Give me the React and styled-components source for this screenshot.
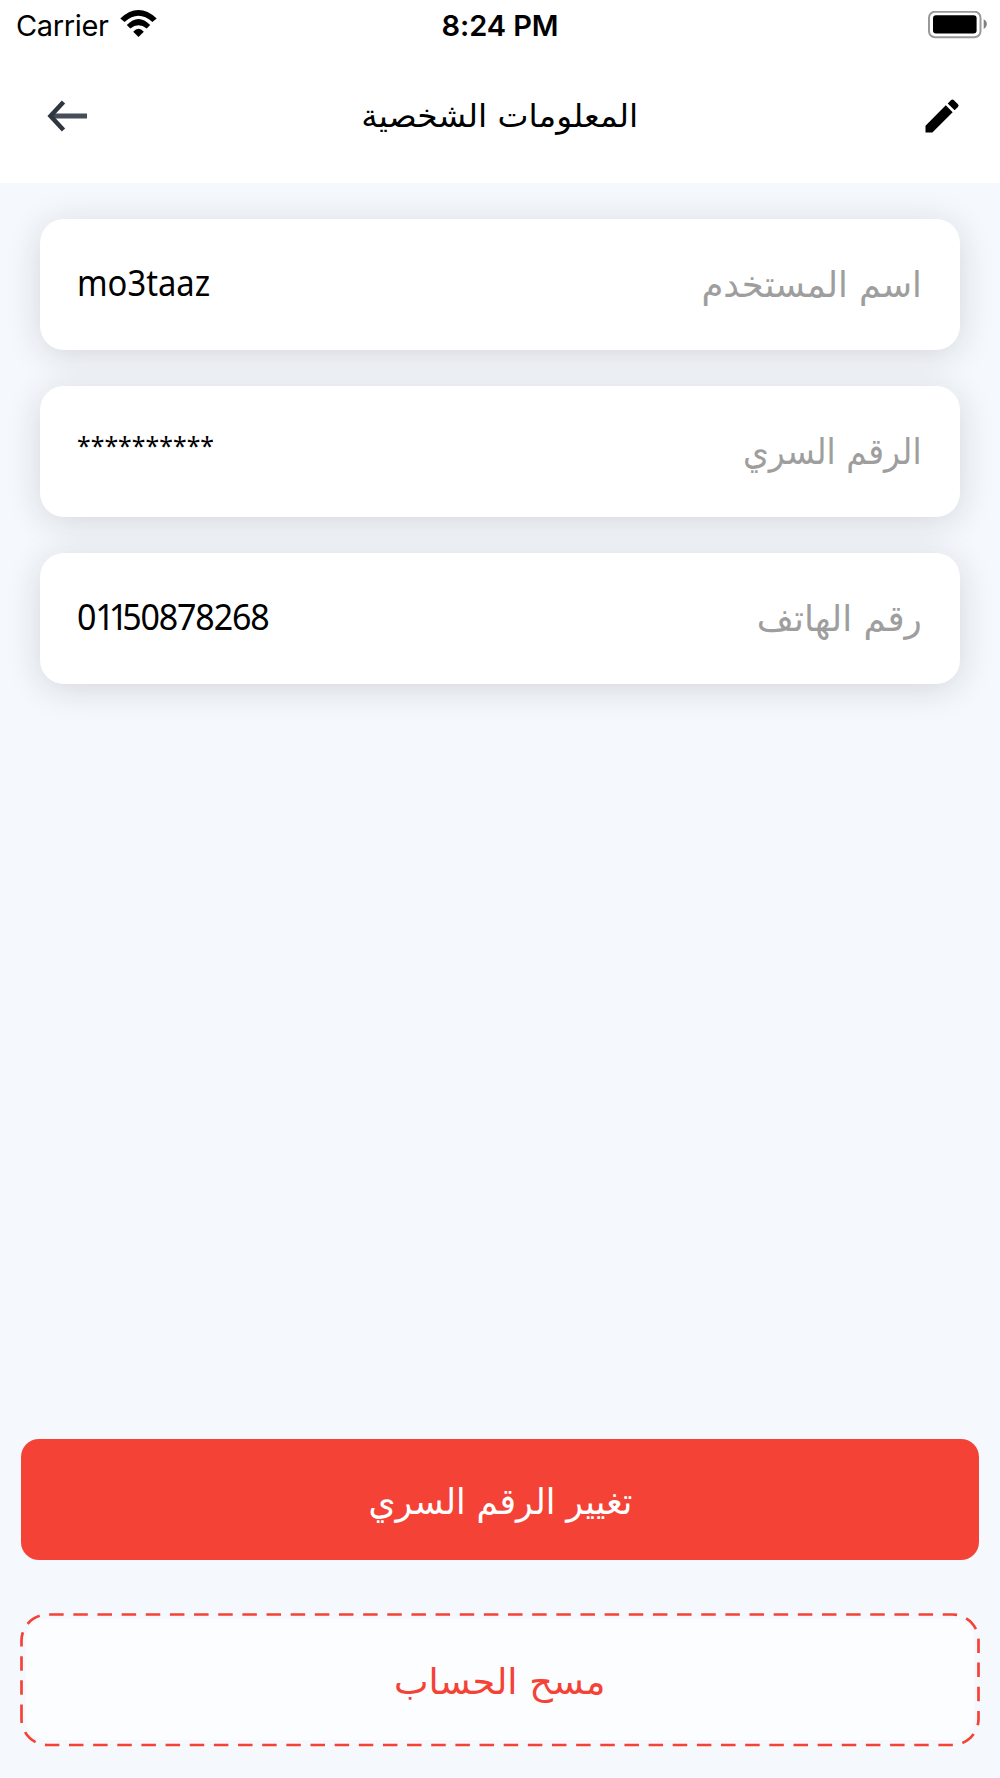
import React from 'react';
import styled, { createGlobalStyle } from 'styled-components';

const GlobalStyle = createGlobalStyle`
  * {
    box-sizing: border-box;
  }

  body {
    margin: 0;
    background: #f5f9fe;
    font-family: 'Noto Sans', 'DejaVu Sans', sans-serif;
  }
`;

const Screen = styled.div`
  display: flex;
  flex-direction: column;
  width: 1000px;
  height: 1778px;
  overflow: hidden;
  background: #f5f9fe;
`;

const Header = styled.header`
  height: 183px;
  background: #fff;
`;

const StatusBar = styled.div`
  display: grid;
  grid-template-columns: 1fr auto 1fr;
  align-items: center;
  height: 50px;
  padding: 0 13px;
  font-family: Inter, sans-serif;
  font-size: 29px;
  color: #000;
`;

const Network = styled.div`
  display: flex;
  align-items: center;
  gap: 11px;
  margin-left: 3px;
`;

const Carrier = styled.span`
  letter-spacing: -0.35px;
`;

const WifiIcon = styled.svg`
  margin-bottom: 2px;
`;

const Time = styled.span`
  font-weight: 600;
  letter-spacing: -0.1px;
`;

const BatteryIcon = styled.svg`
  justify-self: end;
`;

const TitleBar = styled.div`
  display: flex;
  justify-content: space-between;
  align-items: center;
  height: 132px;
  padding: 0 35.5px 0 47px;
`;

const Text = styled.span`
  display: block;
  white-space: nowrap;
  font-size: ${props => props.$size || 36}px;
  line-height: 50px;
  letter-spacing: ${props => props.$spacing || 0}px;
  color: ${props => props.$color || '#000'};
  transform: translateY(${props => props.$shift || 0}px) scaleX(${props => props.$stretch || 1});
  transform-origin: ${props => props.$origin || 'center'};
`;

const Arabic = styled(Text)`
  font-family: 'DejaVu Sans', sans-serif;
`;

const Title = styled(Arabic)`
  margin: 0 11px 0 0;
  font-weight: 400;
`;

const Tight = styled.span`
  letter-spacing: -6.5px;
`;

const Cards = styled.main`
  display: flex;
  flex-direction: column;
  gap: 36px;
  padding: 36px 40px 0;
`;

const Card = styled.section`
  display: flex;
  justify-content: space-between;
  align-items: center;
  height: 131px;
  padding: 0 38px 0 37px;
  border-radius: 24px;
  background: #fff;
  box-shadow: 0 5px 34px rgba(30, 0, 0, 0.15);
`;

const Actions = styled.footer`
  display: flex;
  flex-direction: column;
  gap: 53px;
  margin-top: auto;
  padding: 0 20px 32px;
`;

const Button = styled.button`
  display: flex;
  justify-content: center;
  align-items: center;
  height: 121px;
  margin: 0 1px;
  padding: 0;
  border: 0;
  border-radius: 18px;
  background: #f44336;
`;

const OutlineButton = styled.button`
  position: relative;
  display: flex;
  justify-content: center;
  align-items: center;
  height: 133px;
  padding: 0;
  border: 6px solid transparent;
  border-radius: 26px;
  background: #fbfdff;
  background-clip: padding-box;
`;

const Dashes = styled.svg`
  position: absolute;
  top: -6px;
  left: -6px;
  overflow: visible;
`;

const fields = [
  {
    label: 'اسم المستخدم',
    labelStretch: 0.98,
    value: 'mo3taaz',
    size: 37,
    stretch: 0.885,
    shift: -3,
  },
  {
    label: 'الرقم السري',
    labelStretch: 0.918,
    value: '**********',
    size: 25,
    stretch: 0.995,
    shift: -7,
  },
  {
    label: 'رقم الهاتف',
    labelStretch: 0.995,
    value: <>0<Tight>11</Tight>50878268</>,
    size: 37,
    stretch: 0.92,
    spacing: -1.3,
    shift: -3,
  },
];

const App = () => (
  <>
    <GlobalStyle />
    <Screen>
      <Header>
        <StatusBar>
          <Network>
            <Carrier>Carrier</Carrier>
            <WifiIcon width="37" height="28" viewBox="0 0 37 28">
              <path d="M.3 8.400Q18.500-8.400 36.700 8.400L32.400 12Q18.500-.6 4.600 12Z" />
              <path d="M6.800 15Q18.500 3 30.200 15L26.700 18.600Q18.500 12 10.300 18.600Z" />
              <path d="M13.200 21.700Q18.500 15.700 23.800 21.700L18.500 27Z" />
            </WifiIcon>
          </Network>
          <Time>8:24 PM</Time>
          <BatteryIcon width="59" height="28" viewBox="0 0 59 28">
            <rect x="1" y="0.7" width="51.500" height="25.500" rx="6" fill="none" stroke="#999" strokeWidth="2" />
            <rect x="5" y="4.200" width="43.600" height="18.300" rx="3" />
            <path d="M55.700 8.200Q58.800 9.800 58.800 13T55.700 18Z" fill="#808080" />
          </BatteryIcon>
        </StatusBar>
        <TitleBar>
          <svg width="42" height="32" viewBox="0 0 42 32" fill="none">
            <path d="M4 16H40" stroke="#474c5a" strokeWidth="5" />
            <path d="M16.500 2L3.500 16L16.500 30" stroke="#30363f" strokeWidth="4.500" />
          </svg>
          <Title as="h1" dir="rtl" $size={32} $stretch={1.028}>المعلومات الشخصية</Title>
          <svg width="44" height="44" viewBox="0 0 24 24">
            <path d="M3 17.250V21h3.750L17.810 9.940l-3.750-3.750L3 17.250zM20.710 7.040a1 1 0 0 0 0-1.410l-2.340-2.340a1 1 0 0 0-1.410 0l-1.830 1.830 3.750 3.750 1.830-1.830z" />
          </svg>
        </TitleBar>
      </Header>
      <Cards>
        {fields.map(field => (
          <Card key={field.label}>
            <Text
              $size={field.size}
              $stretch={field.stretch}
              $spacing={field.spacing}
              $shift={field.shift}
              $origin="left"
            >
              {field.value}
            </Text>
            <Arabic dir="rtl" $stretch={field.labelStretch} $origin="right" $color="#9e9e9e">
              {field.label}
            </Arabic>
          </Card>
        ))}
      </Cards>
      <Actions>
        <Button>
          <Arabic dir="rtl" $stretch={0.96} $shift={2} $color="#fff">تغيير الرقم السري</Arabic>
        </Button>
        <OutlineButton>
          <Dashes width="960" height="133" viewBox="0 0 960 133" fill="none">
            <path
              d="M1.500 106V27.500A26 26 0 0 1 27.500 1.500H932.500A26 26 0 0 1 958.500 27.500V106A26 26 0 0 1 932.500 132H27.500A26 26 0 0 1 1.500 106"
              stroke="#f44336"
              strokeWidth="2.700"
              strokeDasharray="14.500 9.650"
            />
          </Dashes>
          <Arabic dir="rtl" $stretch={1.02} $shift={2} $color="#f44336">مسح الحساب</Arabic>
        </OutlineButton>
      </Actions>
    </Screen>
  </>
);

export default App;
